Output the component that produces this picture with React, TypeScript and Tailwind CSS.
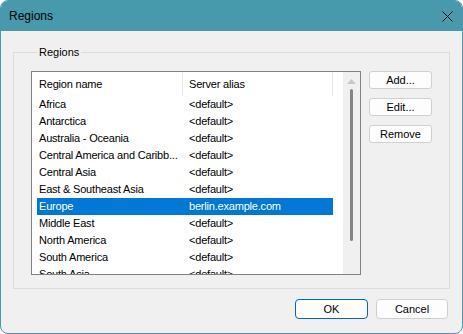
import React from 'react';

const regions = [
  { name: 'Africa', alias: '<default>' },
  { name: 'Antarctica', alias: '<default>' },
  { name: 'Australia - Oceania', alias: '<default>' },
  { name: 'Central America and Caribb...', alias: '<default>' },
  { name: 'Central Asia', alias: '<default>' },
  { name: 'East & Southeast Asia', alias: '<default>' },
  { name: 'Europe', alias: 'berlin.example.com', selected: true },
  { name: 'Middle East', alias: '<default>' },
  { name: 'North America', alias: '<default>' },
  { name: 'South America', alias: '<default>' },
  { name: 'South Asia', alias: '<default>' },
];

const SideButton = ({ label }: { label: string }) => (
  <button className="w-[63px] h-[18px] rounded-[3px] border border-[#d0d0d0] bg-[#fdfdfd] text-[11px] leading-none text-black">
    {label}
  </button>
);

const App = () => {
  return (
    <div className="w-[463px] h-[334px] font-['Liberation_Sans',Arial,sans-serif] text-black select-none">
      <div className="w-full h-full flex flex-col rounded-[8px] border border-[#479aac] bg-[#f0f0f0] overflow-hidden">
        {/* Title bar */}
        <div className="h-[30px] shrink-0 bg-[#479aac] flex items-center justify-between pl-[8px] pr-[9px]">
          <span className="text-[12px] text-black">Regions</span>
          <svg width="11" height="11" viewBox="0 0 11 11" className="text-black">
            <path d="M0.5 0.5 L10.5 10.5 M10.5 0.5 L0.5 10.5" stroke="currentColor" strokeWidth="1" />
          </svg>
        </div>

        {/* Body */}
        <div className="flex-1 flex flex-col px-[12px] pt-[15px]">
          <fieldset className="h-[243px] border border-[#dcdcdc] pl-[17px] pr-[16px]">
            <legend className="ml-[6px] px-[2px] text-[11px] leading-[13px]">Regions</legend>
            <div className="flex gap-[8px] mt-[12px]">
              {/* List view */}
              <div className="w-[330px] h-[204px] border border-[#828282] bg-white flex overflow-hidden">
                <div className="flex-1 flex flex-col tracking-[-0.2px]">
                  <div className="h-[24px] shrink-0 flex items-center text-[11px]">
                    <div className="w-[151px] h-full pl-[7px] flex items-center border-r border-[#e5e5e5]">Region name</div>
                    <div className="w-[150px] h-full pl-[6px] flex items-center border-r border-[#e5e5e5]">Server alias</div>
                  </div>
                  <div className="flex flex-col pl-[5px]">
                    {regions.map((r) => (
                      <div
                        key={r.name}
                        className={`h-[17px] w-[296px] flex items-center text-[11px] whitespace-nowrap ${
                          r.selected ? 'bg-[#0078d7] text-white' : 'text-black'
                        }`}
                      >
                        <div className="w-[146px] pl-[2px] overflow-hidden">{r.name}</div>
                        <div className="pl-[6px]">{r.alias}</div>
                      </div>
                    ))}
                  </div>
                </div>
                {/* Scrollbar */}
                <div className="w-[17px] h-full bg-[#f0f0f0] flex flex-col items-center pt-[7px]">
                  <svg width="9" height="5" viewBox="0 0 9 5">
                    <path d="M0 5 L4.5 0 L9 5 Z" fill="#c8c8c8" />
                  </svg>
                  <div className="mt-[5px] w-[3px] h-[152px] rounded-full bg-[#858585]"></div>
                </div>
              </div>

              {/* Side buttons */}
              <div className="flex flex-col gap-[9px]">
                <SideButton label="Add..." />
                <SideButton label="Edit..." />
                <SideButton label="Remove" />
              </div>
            </div>
          </fieldset>

          <div className="flex justify-end gap-[8px] mt-[10px] pr-[2px]">
            <button className="w-[73px] h-[20px] rounded-[4px] border border-[#0067c0] bg-[#fdfdfd] text-[11px] leading-none">
              OK
            </button>
            <button className="w-[72px] h-[20px] rounded-[4px] border border-[#d0d0d0] bg-[#fdfdfd] text-[11px] leading-none">
              Cancel
            </button>
          </div>
        </div>
      </div>
    </div>
  );
};

export default App;
